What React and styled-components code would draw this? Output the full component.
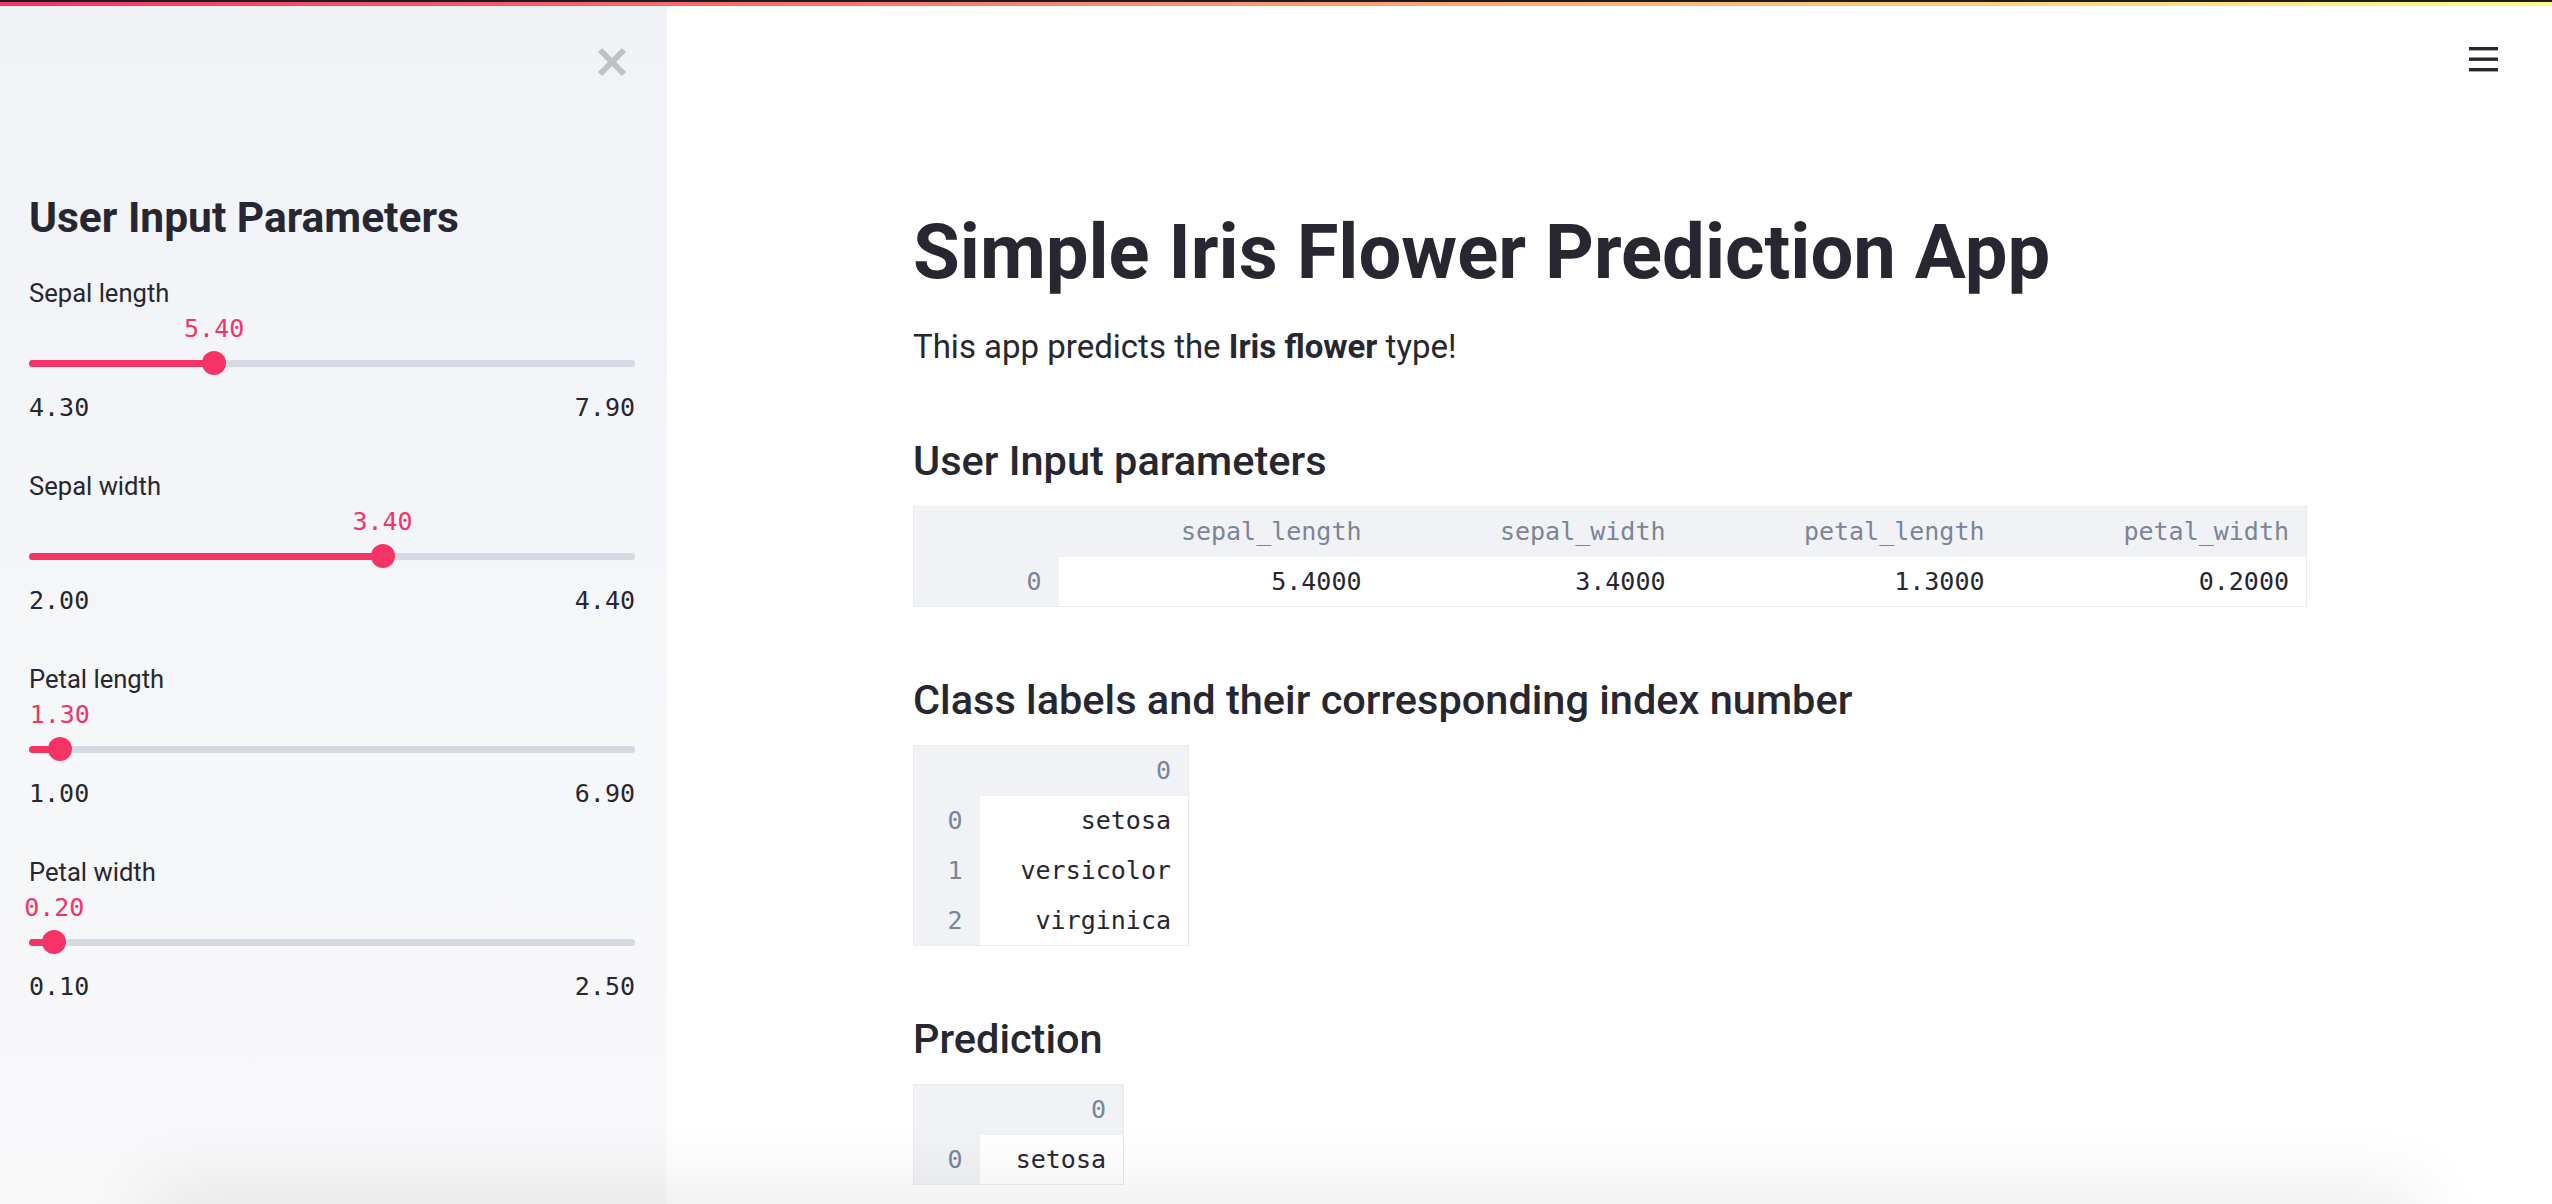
import React from "react";
import styled, { createGlobalStyle } from "styled-components";

const SANS = `"Roboto", "Liberation Sans", sans-serif`;
const MONO = `"DejaVu Sans Mono", "Liberation Mono", monospace`;

const Global = createGlobalStyle`
  html, body { margin: 0; padding: 0; background: #ffffff; }
  body { font-family: ${SANS}; color: #262730; }
  * { box-sizing: border-box; }
`;

const Page = styled.div`
  position: relative;
  display: flex;
  width: 100%;
  height: 100vh;
  overflow: hidden;
  background: #ffffff;
`;

const TopBar = styled.div`
  position: absolute;
  top: 0;
  left: 0;
  right: 0;
  height: 6px;
  border-top: 2px solid #1c1c22;
  background: linear-gradient(90deg, #f63366, #fffd80);
  z-index: 5;
`;

const BottomShade = styled.div`
  position: absolute;
  left: 170px;
  right: 150px;
  top: 100%;
  height: 80px;
  box-shadow: 0 0 70px 20px rgba(0, 0, 0, 0.07);
  z-index: 4;
`;

const Sidebar = styled.aside`
  flex: 0 0 667px;
  display: flex;
  flex-direction: column;
  padding: 0 32px 0 29px;
  background: linear-gradient(180deg, #f0f2f6 0%, #f6f7f9 60%, #f8f8f9 100%);
`;

const CloseRow = styled.div`
  display: flex;
  justify-content: flex-end;
  padding: 42px 3px 0 0;
`;

const IconButton = styled.button`
  width: 40px;
  height: 40px;
  display: flex;
  align-items: center;
  justify-content: center;
  padding: 0;
  border: none;
  background: transparent;
  cursor: pointer;
`;

const SidebarTitle = styled.h2`
  margin: 113px 0 34px 0;
  font-family: ${SANS};
  font-weight: 700;
  font-size: 42.5px;
  line-height: 46px;
  color: #262730;
`;

const SliderBlock = styled.div`
  display: flex;
  flex-direction: column;
  margin-bottom: 42px;
`;

const SliderLabel = styled.label`
  font-family: ${SANS};
  font-size: 25.6px;
  line-height: 36px;
  color: #262730;
`;

const ValueRow = styled.div`
  height: 36px;
  line-height: 36px;
  white-space: nowrap;
`;

const ValueText = styled.span`
  display: inline-block;
  transform: translateX(-50%);
  font-family: ${MONO};
  font-size: 25px;
  color: #f63366;
`;

const TrackArea = styled.div`
  position: relative;
  height: 32px;
  display: flex;
  align-items: center;
`;

const Track = styled.div`
  position: relative;
  width: 100%;
  height: 7px;
  border-radius: 4px;
  background: #d5d9e2;
`;

const TrackFill = styled.div`
  height: 100%;
  border-radius: 4px;
  background: #f63366;
`;

const Thumb = styled.div`
  position: absolute;
  top: 50%;
  width: 24px;
  height: 24px;
  border-radius: 50%;
  background: #f63366;
  transform: translate(-50%, -50%);
`;

const TickRow = styled.div`
  display: flex;
  justify-content: space-between;
  margin-top: 11px;
  font-family: ${MONO};
  font-size: 25px;
  line-height: 36px;
  color: #262730;
`;

const Main = styled.main`
  flex: 1 1 auto;
  display: flex;
  flex-direction: column;
  min-width: 0;
`;

const Toolbar = styled.div`
  height: 118px;
  display: flex;
  justify-content: flex-end;
  align-items: center;
  padding-right: 48px;
`;

const Content = styled.div`
  width: 1393px;
  margin: 0 auto;
  padding-top: 92px;
`;

const Title = styled.h1`
  margin: 0;
  font-family: ${SANS};
  font-weight: 700;
  font-size: 76px;
  line-height: 84px;
  color: #262730;
`;

const Lead = styled.p`
  margin: 32px 0 0 0;
  font-family: ${SANS};
  font-size: 33px;
  line-height: 41px;
  color: #262730;
  b { font-weight: 700; }
`;

const SubHeader = styled.h3`
  margin: ${(p) => (p.$first ? "70px" : "69px")} 0 22px 0;
  font-family: ${SANS};
  font-weight: 500;
  font-size: 41.5px;
  line-height: 47px;
  color: #262730;
`;

const Table = styled.table`
  border-collapse: collapse;
  table-layout: fixed;
  border: 1px solid #e8ebf0;
  font-family: ${MONO};
  font-size: 25px;
`;

const HeadCell = styled.th`
  height: 50px;
  padding: 0 17px 0 0;
  text-align: right;
  font-weight: 400;
  color: #7c8497;
  background: #f0f2f6;
`;

const IndexCell = styled.th`
  height: 50px;
  padding: 0 17px 0 0;
  text-align: right;
  font-weight: 400;
  color: #7c8497;
  background: #f0f2f6;
`;

const DataCell = styled.td`
  height: 50px;
  padding: 0 17px 0 0;
  text-align: right;
  color: #262730;
  background: #ffffff;
`;

const CloseIcon = () => (
  <svg width="30" height="30" viewBox="0 0 30 30">
    <line x1="3" y1="3" x2="27" y2="27" stroke="#bfc1c6" strokeWidth="6" />
    <line x1="27" y1="3" x2="3" y2="27" stroke="#bfc1c6" strokeWidth="6" />
  </svg>
);

const MenuIcon = () => (
  <svg width="30" height="26" viewBox="0 0 30 26">
    <rect x="0" y="1" width="29" height="3.4" fill="#262730" />
    <rect x="0" y="11.5" width="29" height="3.4" fill="#262730" />
    <rect x="0" y="22" width="29" height="3.4" fill="#262730" />
  </svg>
);

const sliders = [
  { label: "Sepal length", min: 4.3, max: 7.9, value: 5.4 },
  { label: "Sepal width", min: 2.0, max: 4.4, value: 3.4 },
  { label: "Petal length", min: 1.0, max: 6.9, value: 1.3 },
  { label: "Petal width", min: 0.1, max: 2.5, value: 0.2 },
];

function Slider({ label, min, max, value }) {
  const pct = ((value - min) / (max - min)) * 100;
  return (
    <SliderBlock>
      <SliderLabel>{label}</SliderLabel>
      <ValueRow>
        <ValueText style={{ marginLeft: `${pct}%` }}>{value.toFixed(2)}</ValueText>
      </ValueRow>
      <TrackArea>
        <Track>
          <TrackFill style={{ width: `${pct}%` }} />
          <Thumb style={{ left: `${pct}%` }} />
        </Track>
      </TrackArea>
      <TickRow>
        <span>{min.toFixed(2)}</span>
        <span>{max.toFixed(2)}</span>
      </TickRow>
    </SliderBlock>
  );
}

function DataTable({ indexWidth, columns, rows }) {
  const total = indexWidth + columns.reduce((s, c) => s + c.width, 0);
  return (
    <Table style={{ width: `${total}px` }}>
      <colgroup>
        <col style={{ width: `${indexWidth}px` }} />
        {columns.map((c) => (
          <col key={c.label} style={{ width: `${c.width}px` }} />
        ))}
      </colgroup>
      <thead>
        <tr>
          <HeadCell />
          {columns.map((c) => (
            <HeadCell key={c.label}>{c.label}</HeadCell>
          ))}
        </tr>
      </thead>
      <tbody>
        {rows.map((r, i) => (
          <tr key={i}>
            <IndexCell>{i}</IndexCell>
            {r.map((v, j) => (
              <DataCell key={j}>{v}</DataCell>
            ))}
          </tr>
        ))}
      </tbody>
    </Table>
  );
}

export default function App() {
  return (
    <>
      <Global />
      <Page>
        <TopBar />
        <Sidebar>
          <CloseRow>
            <IconButton aria-label="Close sidebar">
              <CloseIcon />
            </IconButton>
          </CloseRow>
          <SidebarTitle>User Input Parameters</SidebarTitle>
          {sliders.map((s) => (
            <Slider key={s.label} {...s} />
          ))}
        </Sidebar>
        <Main>
          <Toolbar>
            <IconButton aria-label="Menu">
              <MenuIcon />
            </IconButton>
          </Toolbar>
          <Content>
            <Title>Simple Iris Flower Prediction App</Title>
            <Lead>
              This app predicts the <b>Iris flower</b> type!
            </Lead>
            <SubHeader $first>User Input parameters</SubHeader>
            <DataTable
              indexWidth={145}
              columns={[
                { label: "sepal_length", width: 320 },
                { label: "sepal_width", width: 304 },
                { label: "petal_length", width: 319 },
                { label: "petal_width", width: 305 },
              ]}
              rows={[["5.4000", "3.4000", "1.3000", "0.2000"]]}
            />
            <SubHeader>Class labels and their corresponding index number</SubHeader>
            <DataTable
              indexWidth={66}
              columns={[{ label: "0", width: 209 }]}
              rows={[["setosa"], ["versicolor"], ["virginica"]]}
            />
            <SubHeader>Prediction</SubHeader>
            <DataTable
              indexWidth={66}
              columns={[{ label: "0", width: 144 }]}
              rows={[["setosa"]]}
            />
          </Content>
        </Main>
        <BottomShade />
      </Page>
    </>
  );
}
